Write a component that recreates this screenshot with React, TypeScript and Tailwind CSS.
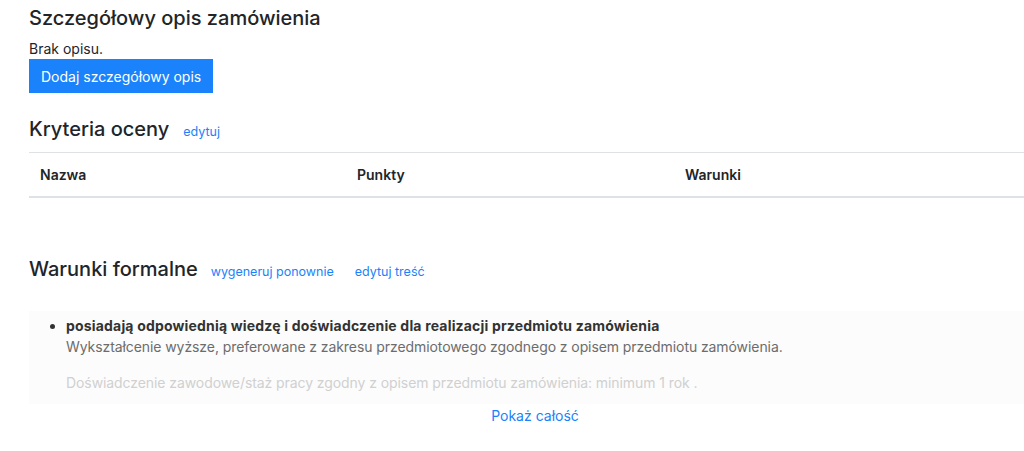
export default function App() {
  return (
    <div className="min-h-[451px] bg-white pl-[29px] text-[#212529] [font-family:Inter,'Liberation_Sans',sans-serif]">
      {/* Opis */}
      <h4 className="pt-[5px] text-[20px] leading-[26px] font-medium">Szczegółowy opis zamówienia</h4>
      <p className="mt-[9px] text-[14px] leading-[18px]">Brak opisu.</p>
      <button className="mt-[1px] h-[34px] px-[12px] bg-[#1a82fb] text-white text-[14px]">
        Dodaj szczegółowy opis
      </button>

      {/* Kryteria */}
      <div className="mt-[23px] flex items-baseline gap-[14px]">
        <h4 className="text-[20px] leading-[26px] font-medium">Kryteria oceny</h4>
        <a className="text-[12.5px] text-[#1a82fb]">edytuj</a>
      </div>
      <table className="mt-[10px] w-full text-left text-[14px]">
        <thead>
          <tr className="border-t border-[#dee2e6] border-b-2">
            <th className="w-[328px] pl-[11px] py-[11px] font-semibold">Nazwa</th>
            <th className="w-[328px] py-[11px] font-semibold">Punkty</th>
            <th className="py-[11px] font-semibold">Warunki</th>
          </tr>
        </thead>
      </table>

      {/* Warunki formalne */}
      <div className="mt-[58px] flex items-baseline gap-[13px]">
        <h4 className="text-[20px] leading-[26px] font-medium">Warunki formalne</h4>
        <a className="text-[12.5px] text-[#1a82fb]">wygeneruj ponownie</a>
        <a className="ml-[8px] text-[12.5px] text-[#1a82fb]">edytuj treść</a>
      </div>
      <div className="mt-[29px] bg-[#fcfcfc] pt-[4px] pb-[11px] pl-[20px] text-[14px] leading-[21px]">
        <ul className="list-disc pl-[17px]">
          <li className="font-bold tracking-[0.18px] text-[#333]">
            posiadają odpowiednią wiedzę i doświadczenie dla realizacji przedmiotu zamówienia
            <p className="font-normal tracking-[-0.08px] text-[#6c6c6c]">
              Wykształcenie wyższe, preferowane z zakresu przedmiotowego zgodnego z opisem przedmiotu zamówienia.
            </p>
            <p className="mt-[15px] font-normal tracking-[-0.08px] text-[#d0d0d0]">
              Doświadczenie zawodowe/staż pracy zgodny z opisem przedmiotu zamówienia: minimum 1 rok .
            </p>
          </li>
        </ul>
      </div>
      <div className="mt-[1px] ml-[17px] text-center text-[14px] leading-[21px] text-[#1a82fb]">
        <a>Pokaż całość</a>
      </div>
    </div>
  );
}
